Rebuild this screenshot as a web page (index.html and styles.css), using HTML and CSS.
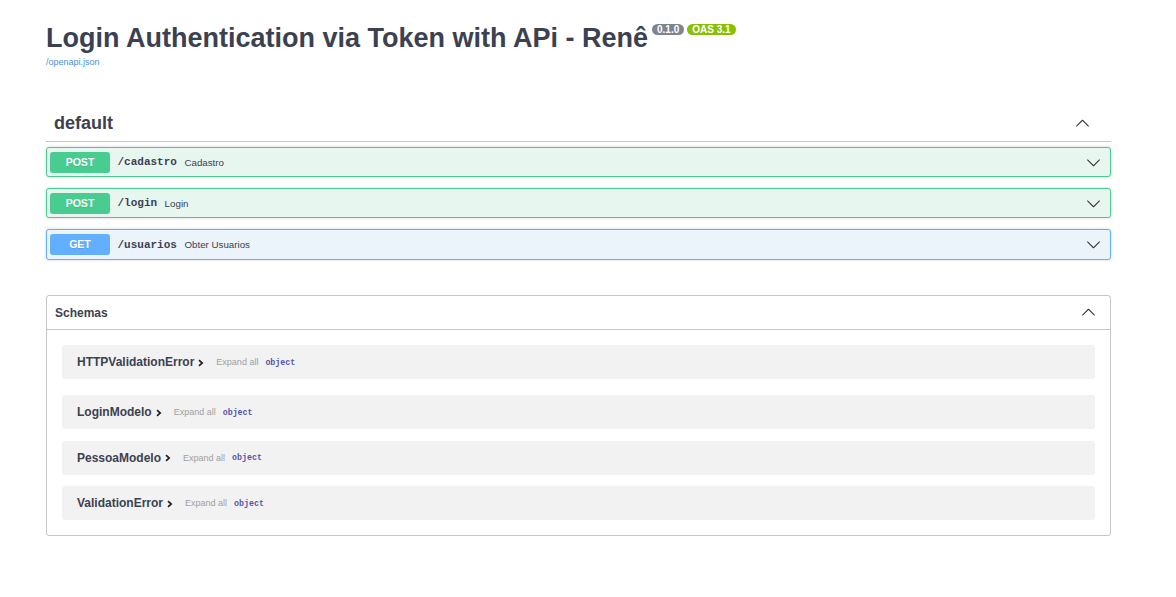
FILE: index.html
```html
<!DOCTYPE html>
<html lang="en">
<head>
<meta charset="utf-8">
<title>Login Authentication via Token with APi - Renê</title>
<link rel="stylesheet" href="styles.css">
</head>
<body>
<div class="wrapper">
  <div class="info">
    <h2 class="title">Login Authentication via Token with APi - Renê
      <span class="badge badge-version">0.1.0</span>
      <span class="badge badge-oas">OAS 3.1</span>
    </h2>
    <a class="url" href="#">/openapi.json</a>
  </div>

  <div class="tag">
    <h3 class="tag-name">default</h3>
    <svg class="arrow" width="15" height="15" viewBox="0 0 20 20"><path transform="rotate(180 10 10)" d="M17.418 6.109c.272-.268.709-.268.979 0s.271.701 0 .969l-7.908 7.83c-.27.268-.707.268-.979 0l-7.908-7.83c-.27-.268-.27-.701 0-.969.271-.268.709-.268.979 0L10 13.25l7.418-7.141z"/></svg>
  </div>

  <div class="ops">
    <div class="op op-post">
      <span class="method">POST</span>
      <span class="path">/cadastro</span>
      <span class="desc">Cadastro</span>
      <svg class="arrow" width="15" height="15" viewBox="0 0 20 20"><path d="M17.418 6.109c.272-.268.709-.268.979 0s.271.701 0 .969l-7.908 7.83c-.27.268-.707.268-.979 0l-7.908-7.83c-.27-.268-.27-.701 0-.969.271-.268.709-.268.979 0L10 13.25l7.418-7.141z"/></svg>
    </div>
    <div class="op op-post">
      <span class="method">POST</span>
      <span class="path">/login</span>
      <span class="desc">Login</span>
      <svg class="arrow" width="15" height="15" viewBox="0 0 20 20"><path d="M17.418 6.109c.272-.268.709-.268.979 0s.271.701 0 .969l-7.908 7.83c-.27.268-.707.268-.979 0l-7.908-7.830c-.27-.268-.27-.701 0-.969.271-.268.709-.268.979 0L10 13.25l7.418-7.141z"/></svg>
    </div>
    <div class="op op-get">
      <span class="method">GET</span>
      <span class="path">/usuarios</span>
      <span class="desc">Obter Usuarios</span>
      <svg class="arrow" width="15" height="15" viewBox="0 0 20 20"><path d="M17.418 6.109c.272-.268.709-.268.979 0s.271.701 0 .969l-7.908 7.83c-.27.268-.707.268-.979 0l-7.908-7.83c-.27-.268-.27-.701 0-.969.271-.268.709-.268.979 0L10 13.25l7.418-7.141z"/></svg>
    </div>
  </div>

  <section class="models">
    <div class="models-head">
      <h4>Schemas</h4>
      <svg class="arrow" width="15" height="15" viewBox="0 0 20 20"><path transform="rotate(180 10 10)" d="M17.418 6.109c.272-.268.709-.268.979 0s.271.701 0 .969l-7.908 7.83c-.27.268-.707.268-.979 0l-7.908-7.83c-.27-.268-.27-.701 0-.969.271-.268.709-.268.979 0L10 13.25l7.418-7.141z"/></svg>
    </div>
    <div class="model first">
      <span class="model-title">HTTPValidationError</span>
      <svg class="toggle" width="8" height="8" viewBox="0 0 8 8"><path d="M2 1.2 L5.2 4 L2 6.8" fill="none" stroke="#222" stroke-width="1.7"/></svg>
      <span class="expand">Expand all</span>
      <span class="type">object</span>
    </div>
    <div class="model">
      <span class="model-title">LoginModelo</span>
      <svg class="toggle" width="8" height="8" viewBox="0 0 8 8"><path d="M2 1.2 L5.2 4 L2 6.8" fill="none" stroke="#222" stroke-width="1.7"/></svg>
      <span class="expand">Expand all</span>
      <span class="type">object</span>
    </div>
    <div class="model">
      <span class="model-title">PessoaModelo</span>
      <svg class="toggle" width="8" height="8" viewBox="0 0 8 8"><path d="M2 1.2 L5.2 4 L2 6.8" fill="none" stroke="#222" stroke-width="1.7"/></svg>
      <span class="expand">Expand all</span>
      <span class="type">object</span>
    </div>
    <div class="model">
      <span class="model-title">ValidationError</span>
      <svg class="toggle" width="8" height="8" viewBox="0 0 8 8"><path d="M2 1.2 L5.2 4 L2 6.8" fill="none" stroke="#222" stroke-width="1.7"/></svg>
      <span class="expand">Expand all</span>
      <span class="type">object</span>
    </div>
  </section>
</div>
</body>
</html>
```

FILE: styles.css
```css
* { box-sizing: border-box; }
html, body {
  margin: 0;
  padding: 0;
  background: #fff;
}
body {
  font-family: "Liberation Sans", Arial, sans-serif;
  color: #3b4151;
}
.wrapper {
  padding: 23px 65px 0 46px;
}
.title {
  margin: 0;
  display: flex;
  align-items: flex-start;
  font-size: 27px;
  line-height: 31px;
  font-weight: bold;
  color: #3b4151;
  white-space: nowrap;
}
.badge {
  display: inline-block;
  margin-top: 1px;
  height: 11px;
  line-height: 11px;
  padding: 0 5px;
  border-radius: 6px;
  font-size: 10px;
  font-weight: bold;
  color: #fff;
}
.badge-version {
  background: #7d8492;
  margin-left: 4px;
}
.badge-oas {
  background: #89bf04;
  margin-left: 3px;
}
.url {
  display: block;
  margin-top: 3px;
  font-size: 9px;
  line-height: 10px;
  color: #4990e2;
  text-decoration: none;
}
.tag {
  margin-top: 38px;
  height: 37px;
  display: flex;
  align-items: center;
  padding: 0 21px 0 8px;
  border-bottom: 1px solid rgba(59, 65, 81, .3);
}
.tag-name {
  margin: 0;
  flex: 1;
  font-size: 18px;
  line-height: 21px;
  font-weight: bold;
  color: #3b4151;
}
.arrow { display: block; fill: #333; flex: none; }
.ops {
  margin-top: 5px;
}
.op {
  display: flex;
  align-items: center;
  height: 30px;
  padding: 0 9px 0 3px;
  margin-bottom: 11px;
  border: 1px solid;
  border-radius: 3px;
  box-shadow: 0 0 3px rgba(0, 0, 0, .19);
}
.op:last-child {
  height: 31px;
  margin-bottom: 0;
}
.op-post {
  border-color: #49cc90;
  background: #e8f6f0;
}
.op-get {
  border-color: #61affe;
  background: #ebf3fb;
}
.method {
  width: 60px;
  height: 21px;
  line-height: 21px;
  text-align: center;
  border-radius: 3px;
  font-size: 10.5px;
  font-weight: bold;
  color: #fff;
  text-shadow: 0 1px 0 rgba(0, 0, 0, .1);
}
.op-post .method { background: #49cc90; }
.op-get .method { background: #61affe; }
.path {
  padding: 0 7.5px;
  font-family: "Liberation Mono", "DejaVu Sans Mono", monospace;
  font-size: 11px;
  font-weight: bold;
  color: #3b4151;
}
.desc {
  flex: 1;
  font-size: 9.75px;
  color: #3b4151;
}
.models {
  margin-top: 35px;
  border: 1px solid rgba(59, 65, 81, .3);
  border-radius: 3px;
  padding-bottom: 3.5px;
}
.models-head {
  height: 34px;
  display: flex;
  align-items: center;
  padding: 0 14px 0 8px;
  border-bottom: 1px solid rgba(59, 65, 81, .3);
}
.models-head h4 {
  margin: 0;
  flex: 1;
  font-size: 12px;
  font-weight: bold;
  color: #3b4151;
}
.model {
  display: flex;
  align-items: center;
  height: 34px;
  margin: 0 15px 11.5px;
  padding: 0 15px;
  background: #f2f2f2;
  border-radius: 3px;
}
.model.first {
  margin: 15px 15px 16px;
}
.model-title {
  font-size: 12px;
  font-weight: bold;
  color: #3b4151;
}
.toggle {
  display: block;
  margin: 1px 0 0 3px;
}
.expand {
  margin-left: 11px;
  font-size: 9px;
  color: #a0a0a0;
}
.type {
  margin-left: 7px;
  font-family: "Liberation Mono", "DejaVu Sans Mono", monospace;
  font-size: 8.3px;
  font-weight: bold;
  color: #55a;
}
```
